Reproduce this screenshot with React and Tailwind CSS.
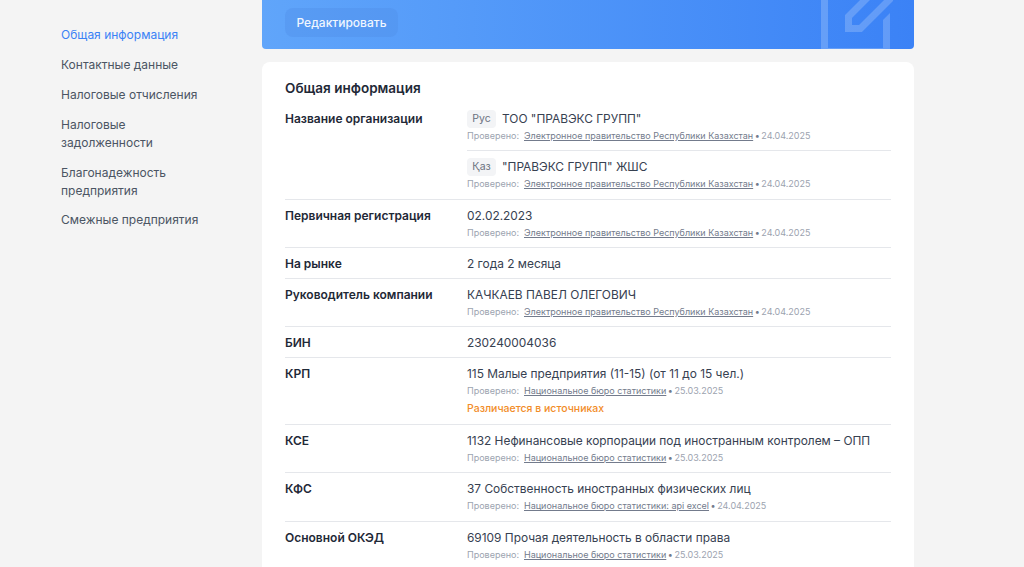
const navItems = [
    'Общая информация',
    'Контактные данные',
    'Налоговые отчисления',
    'Налоговые задолженности',
    'Благонадежность предприятия',
    'Смежные предприятия',
]

const GOV = 'Электронное правительство Республики Казахстан'
const STAT = 'Национальное бюро статистики'

function Source({ name, date }) {
    return (
        <p className="-mt-px mb-[3px] text-[9px] leading-[15px] text-[#9ca3af]">
            Проверено:
            <a href="#" className="ml-[5px] text-[#737b8c] underline">{name}</a>
            <span className="mx-[-1px] text-[#737b8c]"> • </span>
            {date}
        </p>
    )
}

function Row({ label, children }) {
    return (
        <div className="flex border-b border-[#e5e7eb] pt-[6px] pb-1">
            <div className="w-[182px] shrink-0 text-xs leading-5 font-semibold text-[#1f2937]">{label}</div>
            <div className="min-w-0 flex-1 text-[11.9px] leading-5 text-[#374151]">{children}</div>
        </div>
    )
}

function Lang({ code, children }) {
    return (
        <div className="flex h-5 items-center">
            <span className="mr-[6px] flex h-[18px] w-[29px] items-center justify-center rounded bg-[#f3f4f6] text-[10.5px] text-[#6b7280]">{code}</span>
            {children}
        </div>
    )
}

export default function App() {
    return (
        <div className="h-[567px] overflow-hidden bg-[#f4f4f4] font-['Inter',sans-serif]">
            <div className="flex pl-[61px]">
                <nav className="flex w-[201px] shrink-0 flex-col gap-[11.8px] pt-[26.4px]">
                    {navItems.map((item, i) => (
                        <a key={item} href="#" className={`w-[150px] text-xs leading-[18px] ${i === 0 ? 'text-[#3b82f6]' : 'text-[#4b5563]'}`}>{item}</a>
                    ))}
                </nav>

                <main className="w-[652px] shrink-0">
                    <div className="relative h-[49px] overflow-hidden rounded-b bg-gradient-to-r from-[#60a5fa] to-[#3b82f6] pl-[23px] pt-2">
                        <button className="h-[29px] w-[113px] rounded-lg bg-[#4f8fe8]/40 text-xs font-medium text-[#eff6ff]">Редактировать</button>
                        <svg className="absolute left-[559px] top-0" width="72" height="49" viewBox="0 0 72 49" fill="none" stroke="#ffffff" strokeOpacity="0.2" strokeWidth="7">
                            <path d="M3.500 0V49" />
                            <path d="M7 48.500H62" strokeWidth="1" />
                            <path d="M48 -4L27.500 16.500V28.500H39.500L72 -4" />
                            <path d="M62 20L69 13V49H62Z" fill="#ffffff" fillOpacity="0.2" stroke="none" />
                        </svg>
                    </div>

                    <section className="mt-[13px] rounded-t-lg bg-white px-[23px] pt-[17px]">
                        <h2 className="text-[13.5px] leading-[18px] font-semibold text-[#1f2937]">Общая информация</h2>
                        <div className="mt-[6px]">
                            <Row label="Название организации">
                                <Lang code="Рус">ТОО "ПРАВЭКС ГРУПП"</Lang>
                                <Source name={GOV} date="24.04.2025" />
                                <div className="mt-[7px] border-t border-[#e5e7eb] pt-[6px] pb-px">
                                    <Lang code="Қаз">"ПРАВЭКС ГРУПП" ЖШС</Lang>
                                    <Source name={GOV} date="24.04.2025" />
                                </div>
                            </Row>
                            <Row label="Первичная регистрация">
                                02.02.2023
                                <Source name={GOV} date="24.04.2025" />
                            </Row>
                            <Row label="На рынке">2 года 2 месяца</Row>
                            <Row label="Руководитель компании">
                                КАЧКАЕВ ПАВЕЛ ОЛЕГОВИЧ
                                <Source name={GOV} date="24.04.2025" />
                            </Row>
                            <Row label="БИН">230240004036</Row>
                            <Row label="КРП">
                                115 Малые предприятия (11-15) (от 11 до 15 чел.)
                                <Source name={STAT} date="25.03.2025" />
                                <p className="mb-[3px] text-[10.5px] leading-4 font-medium text-[#f28c28]">Различается в источниках</p>
                            </Row>
                            <Row label="КСЕ">
                                1132 Нефинансовые корпорации под иностранным контролем – ОПП
                                <Source name={STAT} date="25.03.2025" />
                            </Row>
                            <Row label="КФС">
                                37 Собственность иностранных физических лиц
                                <div className="pb-px">
                                    <Source name="Национальное бюро статистики: api excel" date="24.04.2025" />
                                </div>
                            </Row>
                            <Row label="Основной ОКЭД">
                                69109 Прочая деятельность в области права
                                <Source name={STAT} date="25.03.2025" />
                            </Row>
                        </div>
                    </section>
                </main>
            </div>
        </div>
    )
}
